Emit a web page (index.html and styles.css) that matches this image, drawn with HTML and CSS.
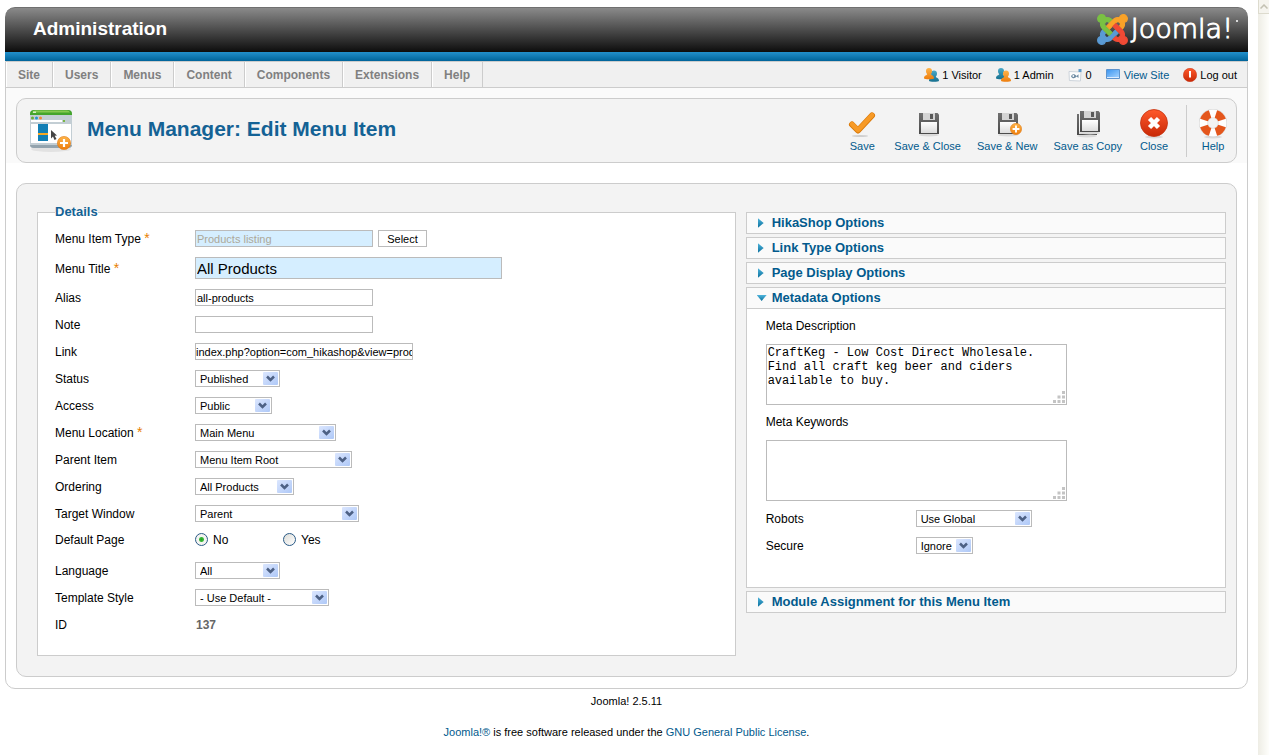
FILE: index.html
```html
<!DOCTYPE html>
<html lang="en">
<head>
    <meta charset="UTF-8">
    <meta name="viewport" content="width=device-width, initial-scale=1.0">
    <title>Administration - Menu Manager: Edit Menu Item</title>
    <link rel="stylesheet" href="styles.css">
</head>
<body>
    <!-- shared icon parts -->
    <svg class="defs" width="0" height="0" aria-hidden="true">
        <defs>
            <linearGradient id="gOrange" x1="0" y1="0" x2="0" y2="1"><stop offset="0" stop-color="#fdb44a"/><stop offset="1" stop-color="#ee7d0c"/></linearGradient>
            <linearGradient id="gRed" x1="0" y1="0" x2="0" y2="1"><stop offset="0" stop-color="#ff5a2c"/><stop offset="1" stop-color="#c82806"/></linearGradient>
            <linearGradient id="gDisk" x1="0" y1="0" x2="0" y2="1"><stop offset="0" stop-color="#6f6f6f"/><stop offset="1" stop-color="#4a4a4a"/></linearGradient>
            <linearGradient id="gPaper" x1="0" y1="0" x2="0" y2="1"><stop offset="0" stop-color="#ffffff"/><stop offset="1" stop-color="#dcdcdc"/></linearGradient>
            <linearGradient id="gBlue" x1="0" y1="0" x2="1" y2="1"><stop offset="0" stop-color="#3f97f0"/><stop offset="1" stop-color="#9fd0ff"/></linearGradient>
            <linearGradient id="gTeal" x1="0" y1="0" x2="0" y2="1"><stop offset="0" stop-color="#4aa9c8"/><stop offset="1" stop-color="#16708f"/></linearGradient>
            <symbol id="disk" viewBox="0 0 22 24">
                <ellipse cx="11" cy="22" rx="10" ry="1.500" fill="#dadada"/>
                <path d="M1 0h18.500l1.500 1.500v19.500h-20z" fill="url(#gDisk)"/>
                <path d="M5 0h12v7h-12z" fill="#d4d4d4"/>
                <path d="M12 1h3v5h-3z" fill="#595959"/>
                <path d="M3 9h16v11h-16z" fill="url(#gPaper)"/>
            </symbol>
            <symbol id="plus" viewBox="0 0 14 14">
                <circle cx="7" cy="7" r="6.600" fill="url(#gOrange)" stroke="#e07a10" stroke-width=".6"/>
                <path d="M7 3v8M3 7h8" stroke="#fff" stroke-width="2.200"/>
            </symbol>
            <path id="person" d="M5 0c1.900 0 3 1.300 3 3 0 1.500-.6 2.500-1.200 3.200.3 1 3.200 1.200 3.200 4 0 1.500-10 1.500-10 0 0-2.800 2.900-3 3.200-4-.6-.7-1.200-1.700-1.200-3.200 0-1.700 1.100-3 3-3z"/>
            <path id="joint" d="M16.719 14.759L14.220 17.260l-2.370 2.370-.462.466c-1.368 1.365-3.297 1.830-5.047 1.397-.327 1.424-1.604 2.490-3.130 2.490C1.438 23.983 0 22.547 0 20.772c0-1.518 1.055-2.789 2.469-3.123-.446-1.760.016-3.705 1.396-5.080l.179-.18 2.370 2.370-.184.181c-.769.779-.769 2.024 0 2.789.771.780 2.022.780 2.787 0l.465-.465 2.367-2.371 2.502-2.506z"/>
        </defs>
    </svg>

    <div class="page">
        <div class="main">
            <header class="header">
                <h1 class="site-title">Administration</h1>
                <div class="logo">
                    <svg width="31" height="31" viewBox="-.5 -.5 25 25" stroke-width=".9" aria-hidden="true">
                        <use href="#joint" fill="#5a9bd5" stroke="#5a9bd5"/>
                        <use href="#joint" fill="#7ac143" stroke="#7ac143" transform="rotate(90 12 12)"/>
                        <use href="#joint" fill="#f9a228" stroke="#f9a228" transform="rotate(180 12 12)"/>
                        <use href="#joint" fill="#f04a35" stroke="#f04a35" transform="rotate(270 12 12)"/>
                    </svg>
                    <span class="logo-text">Joomla!</span>
                    <span class="logo-dot"></span>
                </div>
            </header>
            <div class="blue-bar"></div>

            <div class="content">
                <div class="menu-bar">
                    <nav class="menu">
                        <a href="#">Site</a>
                        <a href="#">Users</a>
                        <a href="#">Menus</a>
                        <a href="#">Content</a>
                        <a href="#">Components</a>
                        <a href="#">Extensions</a>
                        <a href="#">Help</a>
                    </nav>
                    <div class="status">
                        <span class="status-item">
                            <svg width="15" height="14" viewBox="0 0 15 14" aria-hidden="true"><use href="#person" fill="url(#gTeal)" transform="translate(5 2.500)"/><use href="#person" fill="url(#gOrange)"/></svg>
                            1 Visitor
                        </span>
                        <span class="status-item">
                            <svg width="15" height="14" viewBox="0 0 15 14" aria-hidden="true"><use href="#person" fill="url(#gTeal)"/><use href="#person" fill="url(#gOrange)" transform="translate(5 2.500)"/></svg>
                            1 Admin
                        </span>
                        <span class="status-item">
                            <svg width="15" height="14" viewBox="0 0 15 14" aria-hidden="true"><path d="M1 3.500l12 .5-.6 9-11-.5z" fill="#fcfcfc" stroke="#c3ccd4" stroke-width=".8"/><path d="M3 8.200c1.500-2.800 3.800-2.400 5.500-.3l2-1.600v3.800l-2-1.500c-1.900 2.400-4.200 2.100-5.500-.4z" fill="#6f8ca3"/><circle cx="5.300" cy="8" r=".9" fill="#fff"/><path d="M10.500 1h3v3h-3z" fill="#5f9bc9"/></svg>
                            0
                        </span>
                        <a href="#" class="status-item">
                            <svg width="15" height="11" viewBox="0 0 15 11" aria-hidden="true"><path d="M.5.500h13v9h-13z" fill="#dcecff" stroke="#5d93cd"/><path d="M1 1h12v7h-12z" fill="url(#gBlue)"/></svg>
                            View Site
                        </a>
                        <a href="#" class="status-item logout">
                            <svg width="14" height="14" viewBox="0 0 14 14" aria-hidden="true"><circle cx="7" cy="7" r="6.700" fill="url(#gRed)" stroke="#c42c0c" stroke-width=".5"/><path d="M7 3v6.500" stroke="#fff" stroke-width="2"/></svg>
                            Log out
                        </a>
                    </div>
                </div>

                <div class="toolbar-area">
                    <div class="toolbar-box">
                        <svg class="page-icon" width="44" height="44" viewBox="0 0 44 44" aria-hidden="true">
                            <ellipse cx="22" cy="40" rx="20" ry="3" fill="#e2e2e2"/>
                            <rect x="1" y="1" width="42" height="38" rx="4" fill="#c3ced4"/>
                            <path d="M1 36h42q0 3-4 3h-34q-4 0-4-3z" fill="#93a3ad"/>
                            <path d="M1 6v-1q0-4 4-4h34q4 0 4 4v1z" fill="#44a52c"/>
                            <path d="M3 3.500q1-2 3-2h32q2 0 3 2z" fill="#85c950"/>
                            <path d="M4 2.500h3v1.500h-3z" fill="#d6efc4"/>
                            <circle cx="3.500" cy="9" r="1.500" fill="#6dab36"/><circle cx="7.500" cy="9" r="1.500" fill="#2494cb"/><circle cx="11.500" cy="9" r="1.500" fill="#f08a34"/>
                            <path d="M2 11h31v2h-31z" fill="#fff"/><path d="M34 11h2v2h-2z" fill="#7ab648"/>
                            <path d="M2 15h40v19h-40z" fill="#fff"/>
                            <path d="M9 15h10v17h-10z" fill="#137fb5"/><path d="M9 24h10v2h-10z" fill="#f7a823"/>
                            <path d="M22 21l6 5.500-2.300.3 1.800 3.200-2 1-1.500-3.400-2 1.800z" fill="#454545"/>
                            <use href="#plus" x="28" y="27" width="14" height="14"/>
                        </svg>
                        <h2 class="page-title">Menu Manager: Edit Menu Item</h2>
                        <div class="toolbar">
                            <a href="#" class="tool">
                                <svg width="32" height="32" viewBox="0 0 32 32" aria-hidden="true"><ellipse cx="14" cy="29" rx="8" ry="1" fill="#cfcfcf"/><path d="M6 17.500l6 6 14-15" fill="none" stroke="#d97909" stroke-width="6" stroke-linejoin="round" stroke-linecap="round"/><path d="M6 17.200l6 6 14-15" fill="none" stroke="#f79a26" stroke-width="4.500" stroke-linejoin="round" stroke-linecap="round"/></svg>
                                Save
                            </a>
                            <a href="#" class="tool">
                                <svg width="32" height="32" viewBox="0 0 32 32" aria-hidden="true"><use href="#disk" x="6" y="6" width="22" height="24"/></svg>
                                Save &amp; Close
                            </a>
                            <a href="#" class="tool">
                                <svg width="32" height="32" viewBox="0 0 32 32" aria-hidden="true"><use href="#disk" x="6" y="6" width="22" height="24"/><use href="#plus" x="19" y="16" width="12" height="12"/></svg>
                                Save &amp; New
                            </a>
                            <a href="#" class="tool">
                                <svg width="32" height="32" viewBox="0 0 32 32" aria-hidden="true"><use href="#disk" x="4" y="7" width="22" height="24"/><path d="M7 4h21v20h-21z" fill="#f4f4f4"/><use href="#disk" x="7" y="4" width="22" height="24"/></svg>
                                Save as Copy
                            </a>
                            <a href="#" class="tool">
                                <svg width="32" height="32" viewBox="0 0 32 32" aria-hidden="true"><ellipse cx="16" cy="30" rx="9" ry="1.500" fill="#dadada"/><circle cx="16" cy="16" r="13.500" fill="url(#gRed)" stroke="#c4320f" stroke-width=".8"/><path d="M11.500 11.500l9 9M20.500 11.500l-9 9" stroke="#fff" stroke-width="4.500"/></svg>
                                Close
                            </a>
                            <a href="#" class="tool tool-help">
                                <svg width="32" height="32" viewBox="0 0 32 32" aria-hidden="true"><ellipse cx="16" cy="30" rx="9" ry="1.500" fill="#dadada"/><circle cx="16" cy="16" r="9.500" fill="none" stroke="#d0d0d0" stroke-width="9"/><circle cx="16" cy="16" r="9.500" fill="none" stroke="#fff" stroke-width="8"/><circle cx="16" cy="16" r="9.500" fill="none" stroke="#e4561c" stroke-width="8" pathLength="80" stroke-dasharray="12 8" stroke-dashoffset="-4"/></svg>
                                Help
                            </a>
                        </div>
                    </div>
                </div>

                <form class="edit-box">
                    <fieldset class="details">
                        <legend>Details</legend>
                        <div class="row">
                            <label for="type">Menu Item Type <span class="star">*</span></label>
                            <input type="text" id="type" class="required" value="Products listing" disabled>
                            <button type="button" class="btn-select">Select</button>
                        </div>
                        <div class="row row-title">
                            <label for="title">Menu Title <span class="star">*</span></label>
                            <input type="text" id="title" class="required input-title" value="All Products">
                        </div>
                        <div class="row">
                            <label for="alias">Alias</label>
                            <input type="text" id="alias" value="all-products">
                        </div>
                        <div class="row">
                            <label for="note">Note</label>
                            <input type="text" id="note">
                        </div>
                        <div class="row">
                            <label for="link">Link</label>
                            <input type="text" id="link" class="input-link" value="index.php?option=com_hikashop&amp;view=produ" readonly>
                        </div>
                        <div class="row">
                            <label for="published">Status</label>
                            <select id="published" class="w-85"><option>Published</option></select>
                        </div>
                        <div class="row">
                            <label for="access">Access</label>
                            <select id="access" class="w-77"><option>Public</option></select>
                        </div>
                        <div class="row">
                            <label for="menutype">Menu Location <span class="star">*</span></label>
                            <select id="menutype" class="w-141"><option>Main Menu</option></select>
                        </div>
                        <div class="row">
                            <label for="parent">Parent Item</label>
                            <select id="parent" class="w-157"><option>Menu Item Root</option></select>
                        </div>
                        <div class="row">
                            <label for="ordering">Ordering</label>
                            <select id="ordering" class="w-99"><option>All Products</option></select>
                        </div>
                        <div class="row">
                            <label for="target">Target Window</label>
                            <select id="target" class="w-164"><option>Parent</option></select>
                        </div>
                        <div class="row row-radio" role="radiogroup" aria-labelledby="home-label">
                            <span class="label" id="home-label">Default Page</span>
                            <label class="radio"><input type="radio" name="home" value="0" checked>No</label>
                            <label class="radio"><input type="radio" name="home" value="1">Yes</label>
                        </div>
                        <div class="row">
                            <label for="language">Language</label>
                            <select id="language" class="w-85"><option>All</option></select>
                        </div>
                        <div class="row">
                            <label for="style">Template Style</label>
                            <select id="style" class="w-134"><option>- Use Default -</option></select>
                        </div>
                        <div class="row">
                            <label for="id">ID</label>
                            <input type="text" id="id" class="input-id" value="137" readonly>
                        </div>
                    </fieldset>

                    <div class="sliders">
                        <div class="panel">
                            <h3><a href="#" class="panel-title">HikaShop Options</a></h3>
                        </div>
                        <div class="panel">
                            <h3><a href="#" class="panel-title">Link Type Options</a></h3>
                        </div>
                        <div class="panel">
                            <h3><a href="#" class="panel-title">Page Display Options</a></h3>
                        </div>
                        <div class="panel">
                            <h3><a href="#" class="panel-title open">Metadata Options</a></h3>
                            <div class="panel-content">
                                <div class="stack">
                                    <label for="metadesc">Meta Description</label>
                                    <textarea id="metadesc">CraftKeg - Low Cost Direct Wholesale. Find all craft keg beer and ciders available to buy.</textarea>
                                </div>
                                <div class="stack">
                                    <label for="metakey">Meta Keywords</label>
                                    <textarea id="metakey"></textarea>
                                </div>
                                <div class="row">
                                    <label for="robots">Robots</label>
                                    <select id="robots" class="w-116"><option>Use Global</option></select>
                                </div>
                                <div class="row">
                                    <label for="secure">Secure</label>
                                    <select id="secure" class="w-57"><option>Ignore</option></select>
                                </div>
                            </div>
                        </div>
                        <div class="panel">
                            <h3><a href="#" class="panel-title">Module Assignment for this Menu Item</a></h3>
                        </div>
                    </div>
                </form>
            </div>

            <footer class="footer">
                <p>Joomla! 2.5.11</p>
                <p><a href="#">Joomla!®</a> is free software released under the <a href="#">GNU General Public License</a>.</p>
            </footer>
        </div>

        <div class="scroll-track">
            <div class="scroll-up">
                <svg width="8" height="5" viewBox="0 0 8 5" aria-hidden="true"><path d="M.5 4.500l3.500-3.500 3.500 3.500" fill="none" stroke="#c3c1b2" stroke-width="1.500"/></svg>
            </div>
        </div>
    </div>
</body>
</html>
```

FILE: styles.css
```css
* {
    margin: 0;
    padding: 0;
    box-sizing: border-box;
}

body {
    font-family: "Liberation Sans", Arial, Helvetica, sans-serif;
    font-size: 11px;
    line-height: 14px;
    color: #000;
    background: #fff;
}

a {
    color: #025a8d;
    text-decoration: none;
}

a:hover {
    text-decoration: underline;
}

.defs {
    position: absolute;
}

.page {
    display: flex;
    min-height: 100vh;
}

.main {
    flex: 1;
    margin: 7px 10px 0 5px;
}

/* header */
.header {
    display: flex;
    justify-content: space-between;
    align-items: center;
    height: 45px;
    padding: 0 10px 2px 28px;
    border-radius: 10px 10px 0 0;
    border-top: 1px solid #707070;
    background: linear-gradient(#8a8a8a, #0d0d0d);
}

.site-title {
    font-size: 19px;
    line-height: 24px;
    color: #fff;
}

.logo {
    display: flex;
    align-items: center;
    gap: 3px;
}

.logo-text {
    font-family: "DejaVu Sans", sans-serif;
    font-size: 27px;
    font-weight: 200;
    line-height: 30px;
    color: #fff;
    -webkit-text-stroke: 1px #fff;
}

.logo-dot {
    width: 2px;
    height: 2px;
    margin-bottom: 16px;
    border-radius: 50%;
    background: #fff;
}

.blue-bar {
    height: 9px;
    background: linear-gradient(#2290cc, #00649a);
}

.content {
    border: 1px solid #ccc;
    border-radius: 0 0 10px 10px;
}

/* menu and status */
.menu-bar {
    display: flex;
    justify-content: space-between;
    height: 26px;
    border-bottom: 1px solid #ccc;
    background: #f0f0f0;
}

.menu {
    display: flex;
}

.menu a {
    padding: 0 12px 0 11px;
    border-left: 1px solid #fff;
    border-right: 1px solid #ccc;
    font-size: 12px;
    font-weight: bold;
    line-height: 26px;
    color: #808080;
}

.status {
    display: flex;
    align-items: center;
    gap: 14px;
    padding-right: 10px;
}

.status-item {
    display: flex;
    align-items: center;
    gap: 3px;
}

.logout {
    color: #000;
}

/* toolbar */
.toolbar-area {
    padding: 10px 10px 0;
    background: #fafafa;
}

.toolbar-box {
    display: flex;
    align-items: center;
    min-height: 65px;
    padding: 0 7px 0 12px;
    border: 1px solid #ccc;
    border-radius: 10px;
    background: #f3f3f3;
}

.page-title {
    flex: 1;
    margin-left: 14px;
    padding-bottom: 4px;
    font-size: 21px;
    line-height: 28px;
    color: #146295;
}

.toolbar {
    display: flex;
    gap: 16px;
}

.tool {
    display: flex;
    flex-direction: column;
    align-items: center;
    padding: 2px 0 4px;
}

.tool-help {
    padding-left: 10px;
    border-left: 1px solid #ccc;
}

/* edit form */
.edit-box {
    display: grid;
    grid-template-columns: 16fr 11fr;
    gap: 10px;
    align-items: start;
    margin: 20px 10px 11px;
    padding: 20px 10px 20px 20px;
    border: 1px solid #ccc;
    border-radius: 10px;
    background: #f3f3f3;
}

.details {
    min-width: 0;
    padding: 10px 17px 12px;
    border: 1px solid #ccc;
    background: #fff;
}

.details legend {
    font-size: 13px;
    font-weight: bold;
    line-height: 16px;
    color: #146295;
}

.row {
    display: flex;
    align-items: center;
    height: 17px;
    margin-bottom: 10px;
}

.row > label,
.row > .label {
    width: 140px;
    font-size: 12px;
}

.row-title {
    height: 22px;
}

.row-radio {
    height: 20px;
    padding-bottom: 5px;
}

.star {
    font-size: 14px;
    color: #e77e00;
}

input[type="text"] {
    width: 178px;
    height: 17px;
    padding: 0 1px;
    border: 1px solid #bbb;
    font-family: inherit;
    font-size: 11px;
    color: #000;
    background: #fff;
}

input[type="text"].required {
    background: #d5eeff;
}

input[type="text"]:disabled {
    color: #aca899;
}

input[type="text"].input-title {
    width: 307px;
    height: 22px;
    font-size: 15px;
}

input[type="text"].input-link {
    width: 218px;
    padding: 0;
}

input[type="text"].input-id {
    border: 0;
    font-weight: bold;
    font-size: 12px;
    color: #666;
}

.btn-select {
    width: 49px;
    height: 17px;
    margin-left: 5px;
    border: 1px solid #bbb;
    font-family: inherit;
    font-size: 11px;
    background: #fff;
}

select {
    appearance: none;
    height: 17px;
    padding: 0 18px 0 4px;
    border: 1px solid #bbb;
    font-family: inherit;
    font-size: 11px;
    color: #000;
    background: #fff url("data:image/svg+xml,%3Csvg xmlns='http://www.w3.org/2000/svg' width='15' height='13'%3E%3ClinearGradient id='g' x2='1' y2='1'%3E%3Cstop stop-color='%23dbe6fe'/%3E%3Cstop offset='1' stop-color='%23aec8f7'/%3E%3C/linearGradient%3E%3Crect width='15' height='13' rx='1' fill='url(%23g)'/%3E%3Cpath d='M4 4.500l3.500 3.500 3.500-3.500' fill='none' stroke='%234d6185' stroke-width='2.500'/%3E%3C/svg%3E") no-repeat right 1px center;
}

.w-57 { width: 57px; }
.w-77 { width: 77px; }
.w-85 { width: 85px; }
.w-99 { width: 99px; }
.w-116 { width: 116px; }
.w-134 { width: 134px; }
.w-141 { width: 141px; }
.w-157 { width: 157px; }
.w-164 { width: 164px; }

.row > .radio {
    display: flex;
    align-items: center;
    gap: 5px;
    width: 88px;
}

input[type="radio"] {
    appearance: none;
    width: 13px;
    height: 13px;
    border: 1px solid #2a5a86;
    border-radius: 50%;
    background: linear-gradient(135deg, #dcdcd7, #fff);
}

input[type="radio"]:checked {
    background: radial-gradient(circle, #21a121 0, #3cb83c 2px, #f4f4f1 3px);
}

/* sliders */
.sliders {
    display: flex;
    flex-direction: column;
    gap: 3px;
    min-width: 0;
    margin-top: 8px;
}

.panel {
    border: 1px solid #ccc;
    background: #fff;
}

.panel-title {
    display: flex;
    align-items: center;
    height: 20px;
    padding-left: 11px;
    font-size: 13px;
    font-weight: bold;
    line-height: 16px;
    background: #fafafa;
}

.panel-title::before {
    content: '';
    width: 6px;
    height: 10px;
    margin-right: 8px;
    background: linear-gradient(#4fb5dd, #0a6f9c);
    clip-path: polygon(0 0, 100% 50%, 0 100%);
}

.panel-title.open {
    height: 21px;
    padding-left: 10px;
    border-bottom: 1px solid #ccc;
}

.panel-title.open::before {
    width: 10px;
    height: 6px;
    margin-right: 5px;
    clip-path: polygon(0 0, 100% 0, 50% 100%);
}

.panel-content {
    padding: 9px 19px 23px;
}

.panel-content .row > label {
    width: 150px;
}

.stack {
    display: flex;
    flex-direction: column;
    gap: 9px;
    margin-bottom: 9px;
}

.stack label {
    font-size: 12px;
    line-height: 17px;
}

textarea {
    width: 301px;
    max-width: 100%;
    height: 61px;
    padding: 1px;
    border: 1px solid #bbb;
    font-family: "Liberation Mono", "Courier New", monospace;
    font-size: 12px;
    line-height: 14px;
    color: #000;
    overflow: hidden;
}

textarea::-webkit-resizer {
    background: url("data:image/svg+xml,%3Csvg xmlns='http://www.w3.org/2000/svg' width='12' height='12'%3E%3Cpath d='M9 0h3v3h-3zM4.500 4.500h3v3h-3zM9 4.500h3v3h-3zM0 9h3v3h-3zM4.500 9h3v3h-3zM9 9h3v3h-3z' fill='%23c4c4c4'/%3E%3C/svg%3E") no-repeat right 1px bottom 1px;
}

/* footer */
.footer {
    text-align: center;
}

.footer p {
    margin-top: 5px;
}

.footer p + p {
    margin-top: 17px;
}

/* scroll bar strip on the right */
.scroll-track {
    flex: 0 0 11px;
    background: linear-gradient(to right, #eeede5, #fefefb);
}

.scroll-up {
    display: flex;
    align-items: center;
    justify-content: flex-end;
    height: 14px;
    padding-right: 1px;
    border: 1px solid #dddbce;
    border-width: 0 0 1px 1px;
    background: #f5f4ee;
}
```
